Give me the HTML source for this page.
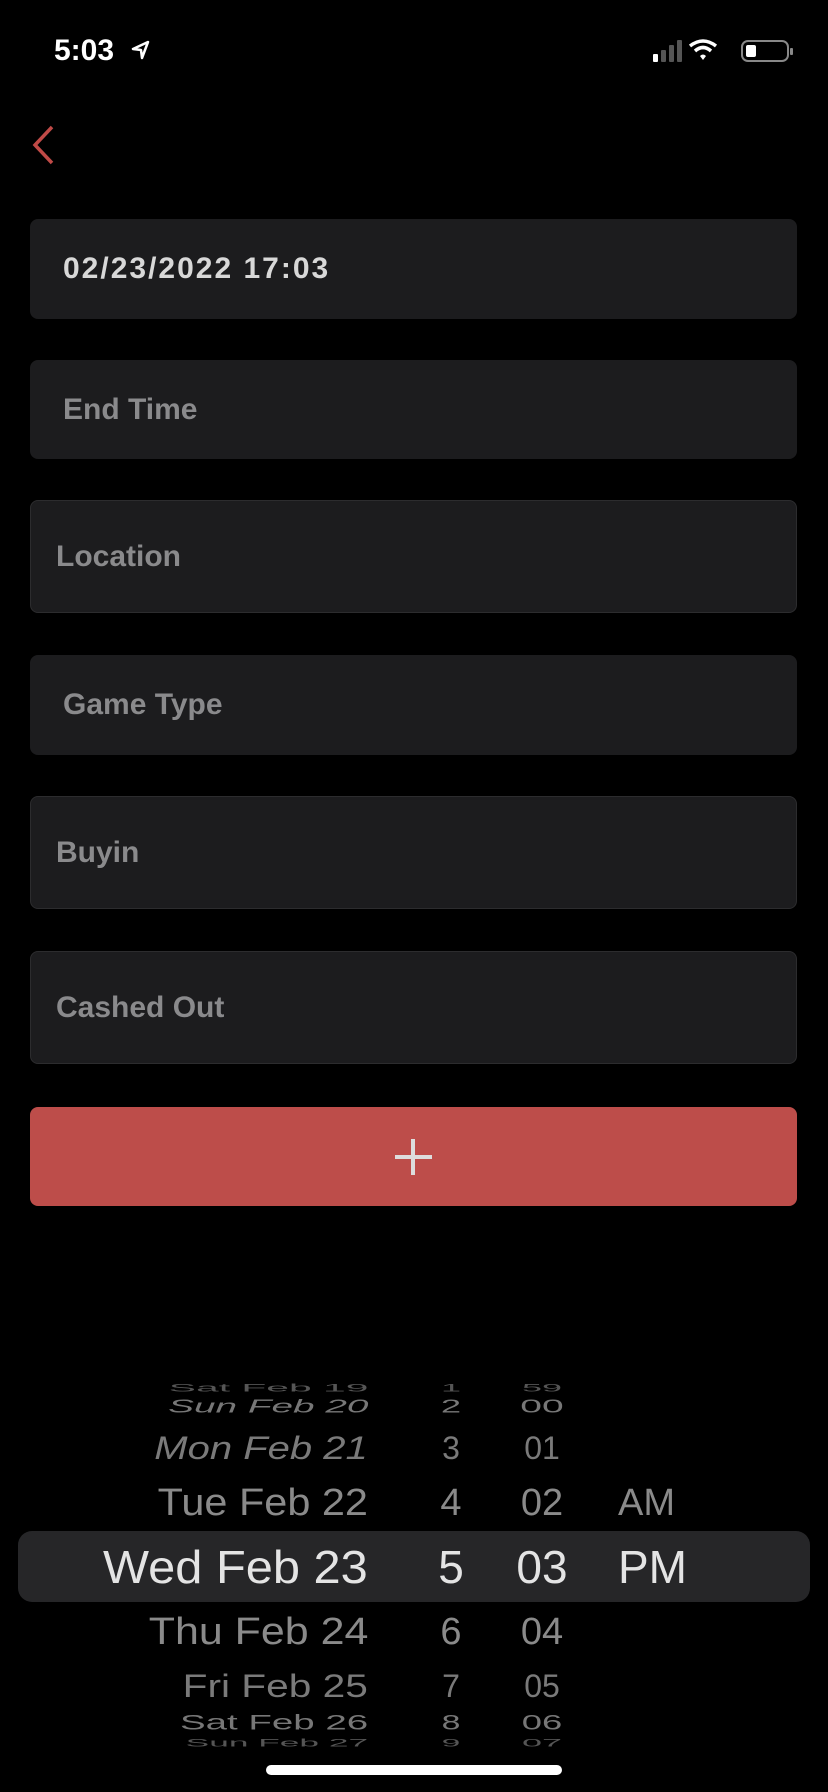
<!DOCTYPE html>
<html><head><meta charset="utf-8"><style>
*{margin:0;padding:0;box-sizing:border-box}
body{width:828px;height:1792px;background:#000;position:relative;overflow:hidden;font-family:"Liberation Sans",sans-serif}
.f{position:absolute;left:30px;width:767px;background:#1c1c1e;border-radius:8px;color:#8a8a8c;font-weight:bold;font-size:30px;display:flex;align-items:center}
.b{border:1px solid #2c2c2e}
.r{position:absolute;left:0;width:828px;height:0}
.r span{position:absolute;top:0;white-space:nowrap;line-height:1}
.d{right:460px;text-align:right;transform-origin:right center}
.h{left:451px}
.m{left:542px}
.a{left:618px}
</style></head><body>
<div style="position:absolute;left:54px;top:34px;color:#fff;font-size:30px;font-weight:bold">5:03</div>
<svg style="position:absolute;left:131px;top:40px" width="20" height="20" viewBox="0 0 20 20"><path d="M17 2 L2 9 L10 10 L11 18 Z" fill="none" stroke="#fff" stroke-width="2.5" stroke-linejoin="round"/></svg>
<svg style="position:absolute;left:650px;top:38px" width="150" height="26" viewBox="0 0 150 26">
<rect x="3" y="16" width="5" height="8" rx="1" fill="#fff"/><rect x="11" y="12" width="5" height="12" rx="1" fill="#555"/><rect x="19" y="7" width="5" height="17" rx="1" fill="#555"/><rect x="27" y="2" width="5" height="22" rx="1" fill="#555"/>
<path d="M40 8 Q53 -2 66 8" stroke="#fff" stroke-width="3.5" fill="none"/><path d="M45 13 Q53 6 61 13" stroke="#fff" stroke-width="3.5" fill="none"/><path d="M50 18 L53 22 L56 18 Q53 15 50 18Z" fill="#fff"/>
<rect x="92" y="3" width="46" height="20" rx="6" fill="none" stroke="#888" stroke-width="2"/><rect x="96" y="7" width="10" height="12" rx="2" fill="#fff"/><rect x="140" y="10" width="3" height="7" rx="1" fill="#888"/>
</svg>
<svg style="position:absolute;left:30px;top:124px" width="28" height="42" viewBox="0 0 28 42"><path d="M22 3 L5 21 L22 39" stroke="#c04a47" stroke-width="3.5" fill="none"/></svg>
<div class="f" style="top:219px;height:100px;padding-left:33px;color:#d8d8d8;letter-spacing:2px">02/23/2022 17:03</div>
<div class="f" style="top:360px;height:99px;padding-left:33px">End Time</div>
<div class="f b" style="top:500px;height:113px;padding-left:25px">Location</div>
<div class="f" style="top:655px;height:100px;padding-left:33px">Game Type</div>
<div class="f b" style="top:796px;height:113px;padding-left:25px">Buyin</div>
<div class="f b" style="top:951px;height:113px;padding-left:25px">Cashed Out</div>
<div style="position:absolute;left:30px;top:1107px;width:767px;height:99px;background:#bd4d4a;border-radius:8px"></div>
<div style="position:absolute;left:395px;top:1155px;width:37px;height:4px;background:#ddd"></div>
<div style="position:absolute;left:411px;top:1139px;width:4px;height:36px;background:#ddd"></div>
<div style="position:absolute;left:18px;top:1531px;width:792px;height:71px;background:#262628;border-radius:14px"></div>
<div style="position:absolute;left:0;top:0">
<div class="r" style="top:1383px;color:#555;transform:scaleY(.45)"><span class="d" style="font-size:24px;transform:scaleX(1.7)">Sat Feb 19</span><span class="h" style="font-size:24px;transform:translateX(-50%) scaleX(1.5)">1</span><span class="m" style="font-size:24px;transform:translateX(-50%) scaleX(1.5)">59</span></div>
<div class="r" style="top:1397px;color:#777;transform:scaleY(.7)"><span class="d" style="font-size:26px;font-style:italic;transform:scaleX(1.49)">Sun Feb 20</span><span class="h" style="font-size:26px;transform:translateX(-50%) scaleX(1.4)">2</span><span class="m" style="font-size:26px;transform:translateX(-50%) scaleX(1.5)">00</span></div>
<div class="r" style="top:1432px;color:#7a7a7a"><span class="d" style="font-size:32px;font-style:italic;transform:scaleX(1.25)">Mon Feb 21</span><span class="h" style="font-size:32px;transform:translateX(-50%)">3</span><span class="m" style="font-size:32px;transform:translateX(-50%)">01</span></div>
<div class="r" style="top:1484px;color:#8a8a8a"><span class="d" style="font-size:38px;transform:scaleX(1.09)">Tue Feb 22</span><span class="h" style="font-size:38px;transform:translateX(-50%)">4</span><span class="m" style="font-size:38px;transform:translateX(-50%)">02</span><span class="a" style="font-size:38px">AM</span></div>
<div class="r" style="top:1544px;color:#e4e4e4"><span class="d" style="font-size:46px;transform:scaleX(1.06)">Wed Feb 23</span><span class="h" style="font-size:46px;transform:translateX(-50%)">5</span><span class="m" style="font-size:46px;transform:translateX(-50%)">03</span><span class="a" style="font-size:46px">PM</span></div>
<div class="r" style="top:1613px;color:#8a8a8a"><span class="d" style="font-size:38px;transform:scaleX(1.13)">Thu Feb 24</span><span class="h" style="font-size:38px;transform:translateX(-50%)">6</span><span class="m" style="font-size:38px;transform:translateX(-50%)">04</span></div>
<div class="r" style="top:1670px;color:#7a7a7a"><span class="d" style="font-size:32px;transform:scaleX(1.27)">Fri Feb 25</span><span class="h" style="font-size:32px;transform:translateX(-50%)">7</span><span class="m" style="font-size:32px;transform:translateX(-50%)">05</span></div>
<div class="r" style="top:1712px;color:#777;transform:scaleY(.8)"><span class="d" style="font-size:26px;transform:scaleX(1.48)">Sat Feb 26</span><span class="h" style="font-size:26px;transform:translateX(-50%) scaleX(1.3)">8</span><span class="m" style="font-size:26px;transform:translateX(-50%) scaleX(1.4)">06</span></div>
<div class="r" style="top:1738px;color:#555;transform:scaleY(.45)"><span class="d" style="font-size:24px;transform:scaleX(1.47)">Sun Feb 27</span><span class="h" style="font-size:24px;transform:translateX(-50%) scaleX(1.4)">9</span><span class="m" style="font-size:24px;transform:translateX(-50%) scaleX(1.5)">07</span></div>
</div>
<div style="position:absolute;left:266px;top:1765px;width:296px;height:10px;border-radius:5px;background:#fff"></div>
</body></html>
